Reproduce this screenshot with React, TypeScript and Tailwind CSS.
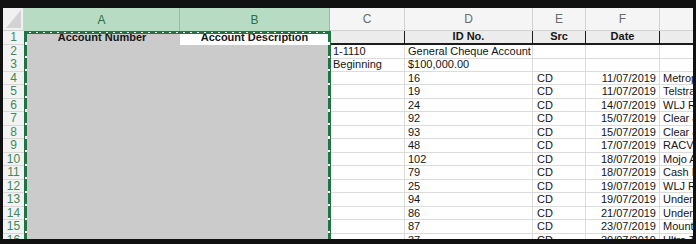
import React from "react";

const COLS = "grid-cols-[21px_156px_150px_75px_128px_53px_74px_120px]";

type Row = { c?: string; d?: string; e?: string; f?: string; g?: string };

const data: Row[] = [
  { c: "1-1110", d: "General Cheque Account" },
  { c: "Beginning", d: "$100,000.00" },
  { d: "16", e: "CD", f: "11/07/2019", g: "Metropolitan" },
  { d: "19", e: "CD", f: "11/07/2019", g: "Telstra Ltd" },
  { d: "24", e: "CD", f: "14/07/2019", g: "WLJ Rentals" },
  { d: "92", e: "CD", f: "15/07/2019", g: "Clear & Co" },
  { d: "93", e: "CD", f: "15/07/2019", g: "Clear & Co" },
  { d: "48", e: "CD", f: "17/07/2019", g: "RACV Ltd" },
  { d: "102", e: "CD", f: "18/07/2019", g: "Mojo Apps" },
  { d: "79", e: "CD", f: "18/07/2019", g: "Cash Flow" },
  { d: "25", e: "CD", f: "19/07/2019", g: "WLJ Rentals" },
  { d: "94", e: "CD", f: "19/07/2019", g: "Underwood" },
  { d: "86", e: "CD", f: "21/07/2019", g: "Underwood" },
  { d: "87", e: "CD", f: "23/07/2019", g: "Mountain" },
  { d: "37", e: "CD", f: "30/07/2019", g: "Ultra Tech" },
];

const cell = "h-full border-r border-b border-[#dcdcdc] overflow-hidden whitespace-nowrap px-[3px] leading-[13.5px]";

function RowNum({ n }: { n: number }) {
  return (
    <div className="h-full bg-[#f3f3f3] border-b border-[#d8d8d8] flex items-center justify-center text-[12px] leading-none text-[#3d8a5c]">
      {n}
    </div>
  );
}

export default function App() {
  return (
    <div
      className="w-[696px] h-[244px] bg-[#111111] pt-[8px] pl-[3px] pr-[3px] pb-[5px]"
      style={{ fontFamily: '"Liberation Sans", Arial, sans-serif' }}
    >
      <div className="relative w-full h-full bg-white overflow-hidden text-[11px] text-[#151515]">
        {/* column header */}
        <div className={`grid ${COLS} h-[23px]`}>
          <div className="relative bg-[#f1f1f1] border-r border-b border-[#d0d0d0]">
            <div className="absolute right-[2px] bottom-[2px] w-[15px] h-[18px] bg-[#d3d3d3] [clip-path:polygon(100%_0,100%_100%,0_100%)]" />
          </div>
          <div className="bg-[#b8dcc3] border-r border-[#8cc29f] flex items-center justify-center text-[12px] text-[#2e6e47]">A</div>
          <div className="bg-[#b8dcc3] border-r border-[#8cc29f] flex items-center justify-center text-[12px] text-[#2e6e47]">B</div>
          {["C", "D", "E", "F", ""].map((l, i) => (
            <div
              key={i}
              className="bg-[#f5f5f5] border-r border-b border-[#d2d2d2] flex items-center justify-center text-[12px] text-[#6b6b6b]"
            >
              {l}
            </div>
          ))}
        </div>

        {/* row 1 */}
        <div className={`grid ${COLS} h-[13.5px]`}>
          <RowNum n={1} />
          <div className="h-full bg-[#cbcbcb] flex items-center justify-center font-bold leading-none">Account Number</div>
          <div className="h-full bg-white flex items-center justify-center font-bold leading-none mr-[1px]">Account Description</div>
          <div className="h-full bg-[#ececec] border-b-2 border-r border-[#1c1c1c]" />
          <div className="h-full bg-[#ececec] border-b-2 border-r border-[#1c1c1c] flex items-center justify-center font-bold leading-none">ID No.</div>
          <div className="h-full bg-[#ececec] border-b-2 border-r border-[#1c1c1c] flex items-center justify-center font-bold leading-none">Src</div>
          <div className="h-full bg-[#ececec] border-b-2 border-r border-[#1c1c1c] flex items-center justify-center font-bold leading-none">Date</div>
          <div className="h-full bg-[#ececec] border-b-2 border-[#1c1c1c]" />
        </div>

        {data.map((r, i) => (
          <div key={i} className={`grid ${COLS} h-[13.5px]`}>
            <RowNum n={i + 2} />
            <div className="h-full bg-[#cbcbcb]" />
            <div className="h-full bg-[#cbcbcb]" />
            <div className={cell}>{r.c}</div>
            <div className={`${cell} ${i === 0 ? "overflow-visible" : ""}`}>{r.d}</div>
            <div className={`${cell} pl-[4px]`}>{r.e}</div>
            <div className={`${cell} text-right`}>{r.f}</div>
            <div className={`${cell} px-[2px]`}>{r.g}</div>
          </div>
        ))}

        {/* selection marquee */}
        <div className="absolute left-[21px] top-[23px] w-[307px] h-[240px] pointer-events-none">
          <div className="absolute left-0 right-0 top-0 h-[3px] bg-[#217346]">
            <div className="absolute left-0 right-0 top-[1px] h-[1px] bg-[repeating-linear-gradient(90deg,transparent_0_5px,#ffffff_5px_7px)]" />
          </div>
          <div className="absolute left-0 top-0 bottom-0 w-[3px] bg-[#217346]">
            <div className="absolute top-0 bottom-0 left-[1px] w-[2px] bg-[repeating-linear-gradient(180deg,transparent_0_11px,#ffffff_11px_13.5px)]" />
          </div>
          <div className="absolute right-0 top-0 bottom-0 w-[3px] bg-[#217346]">
            <div className="absolute top-0 bottom-0 left-0 w-[2px] bg-[repeating-linear-gradient(180deg,transparent_0_11px,#ffffff_11px_13.5px)]" />
          </div>
        </div>
      </div>
    </div>
  );
}
